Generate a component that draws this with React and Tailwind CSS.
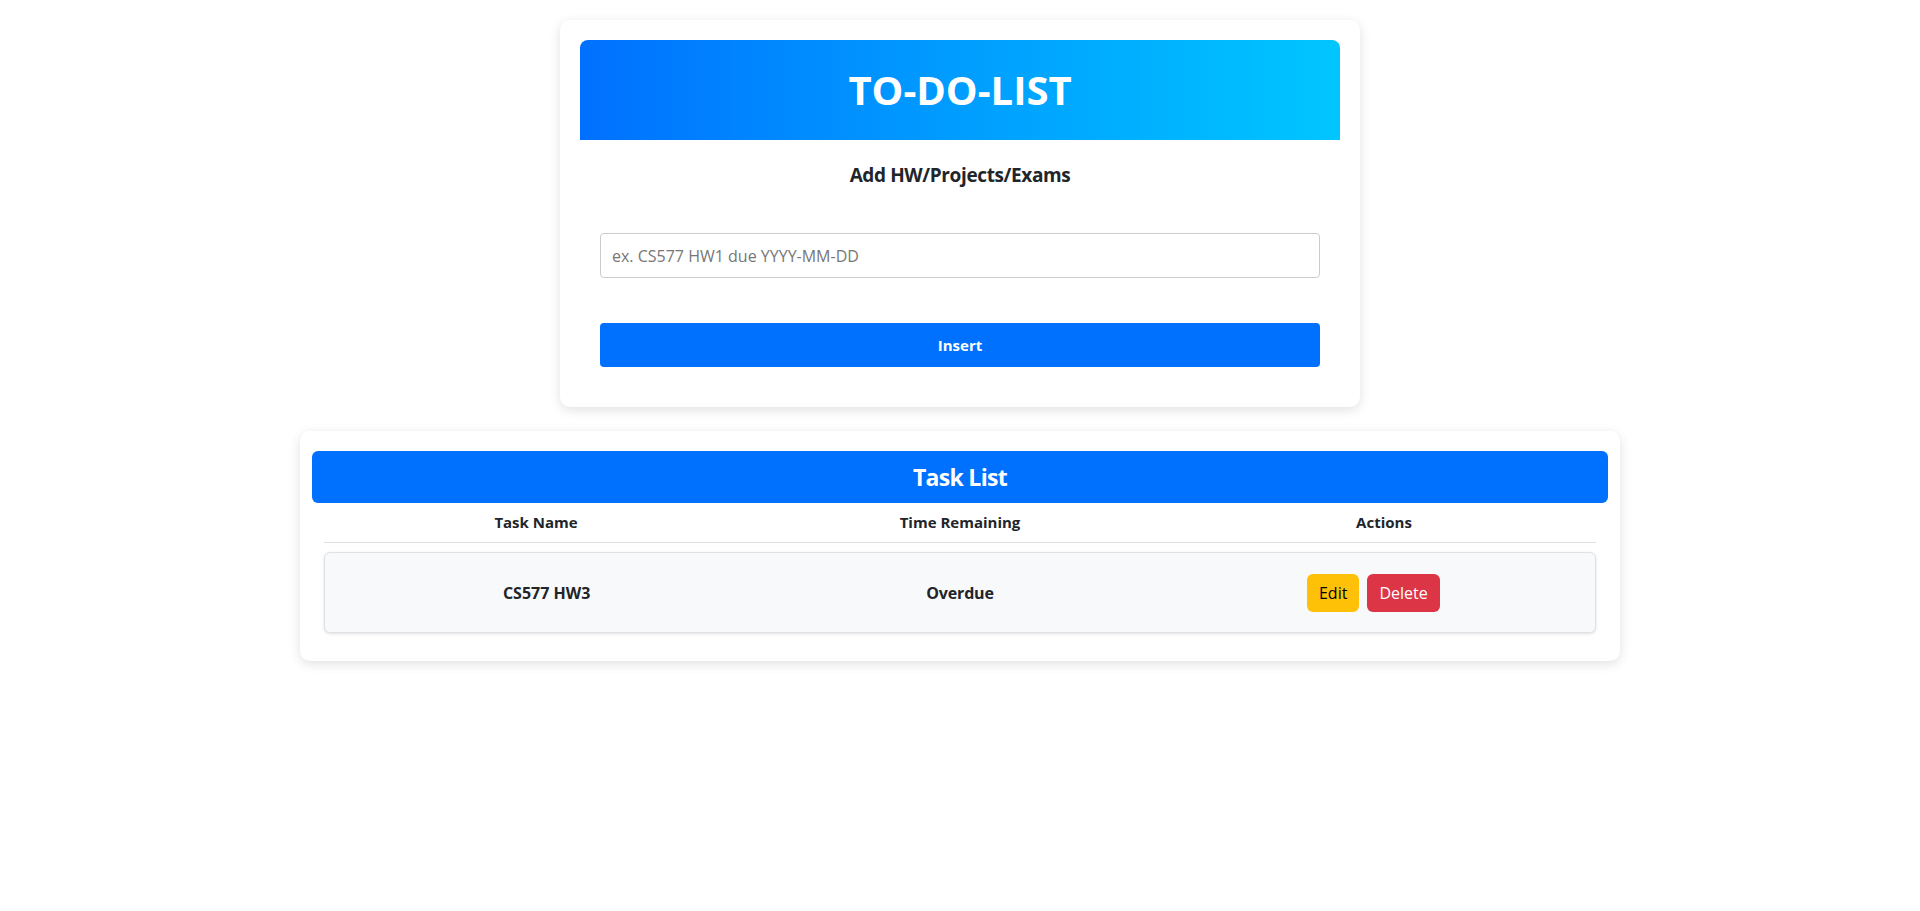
import React, { useState } from 'react';

const font = { fontFamily: '"Open Sans", "Noto Sans", sans-serif' };

const TaskRow = ({ task, onDelete }) => (
  <div className="mt-[9px] grid h-[81px] grid-cols-3 items-center rounded-md border border-[#dee2e6] bg-[#f8f9fa] px-[15px] text-center text-base font-bold text-[#212529] shadow-[0_1px_3px_rgba(0,0,0,0.12)]">
    <div>{task.name}</div>
    <div className="tracking-[-0.01em]">{task.remaining}</div>
    <div className="flex items-center justify-center gap-2">
      <button className="h-[38px] rounded-md bg-[#ffc107] px-3 text-base font-normal text-black">Edit</button>
      <button
        onClick={onDelete}
        className="h-[38px] rounded-md bg-[#dc3545] px-3 text-base font-normal text-white"
      >
        Delete
      </button>
    </div>
  </div>
);

export default function App() {
  const [text, setText] = useState('');
  const [tasks, setTasks] = useState([{ name: 'CS577 HW3', remaining: 'Overdue' }]);

  return (
    <div className="min-h-screen bg-white pt-[20px]" style={font}>
      {/* Add form card */}
      <div className="mx-auto w-[800px] rounded-[10px] bg-white px-5 pt-5 pb-10 shadow-[0_3px_12px_rgba(0,0,0,0.12)]">
        <div className="flex h-[100px] items-center justify-center rounded-t-lg bg-linear-to-r from-[#0070ff] to-[#00c6ff]">
          <h1 className="text-[40px] font-bold text-white">TO-DO-LIST</h1>
        </div>
        <div className="px-5">
          <h3 className="mt-5 text-center text-[19px] leading-[30px] font-bold tracking-[-0.02em] text-[#212529]">
            Add HW/Projects/Exams
          </h3>
          <input
            value={text}
            onChange={(e) => setText(e.target.value)}
            placeholder="ex. CS577 HW1 due YYYY-MM-DD"
            className="mt-[43px] block h-[45px] w-full rounded border border-[#cccccc] px-[11px] text-base text-[#212529] outline-none placeholder:text-[#777777]"
          />
          <button className="mt-[45px] block h-[44px] w-full rounded bg-[#0070ff] text-[15px] font-bold text-white">
            Insert
          </button>
        </div>
      </div>

      {/* Task list card */}
      <div className="mx-auto mt-6 w-[1320px] rounded-[10px] bg-white px-3 pt-5 pb-[28px] shadow-[0_3px_12px_rgba(0,0,0,0.12)]">
        <div className="flex h-[52px] items-center justify-center rounded-md bg-[#0070ff]">
          <h2 className="text-[23px] font-bold tracking-[-0.03em] text-white">Task List</h2>
        </div>
        <div className="px-3">
          <div className="grid h-[40px] grid-cols-3 items-center border-b border-[#dee2e6] text-center text-[15px] font-bold text-[#212529]">
            <div>Task Name</div>
            <div>Time Remaining</div>
            <div>Actions</div>
          </div>
          {tasks.map((t, i) => (
            <TaskRow key={i} task={t} onDelete={() => setTasks(tasks.filter((_, j) => j !== i))} />
          ))}
        </div>
      </div>
    </div>
  );
}
